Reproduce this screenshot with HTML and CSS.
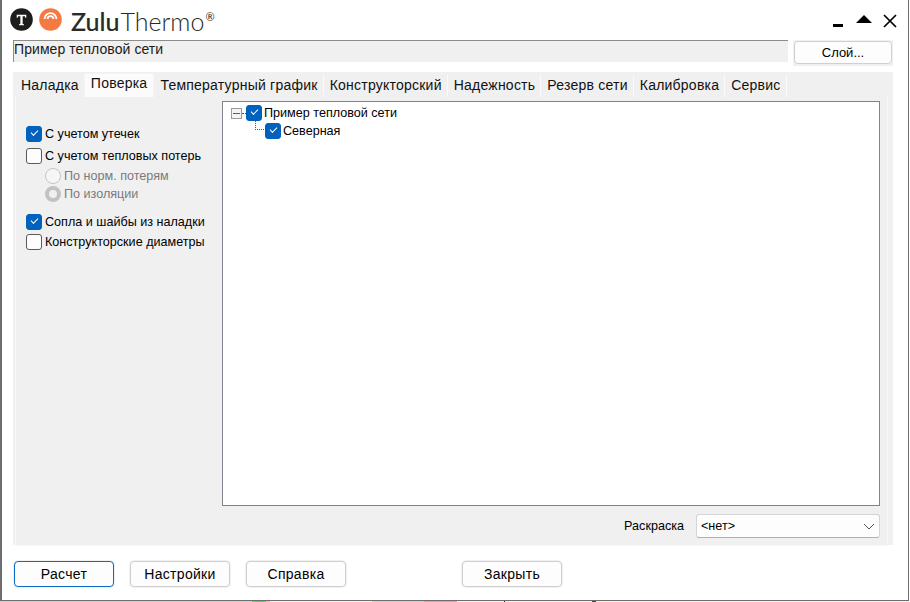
FILE: index.html
```html
<!DOCTYPE html>
<html lang="ru">
<head>
  <meta charset="UTF-8" />
  <title>ZuluThermo</title>
  <link rel="stylesheet" href="styles.css">
</head>
<body>
  <div class="window">
    <header class="titlebar">
      <div class="logo">
        <svg class="logo-icon" width="23" height="23" viewBox="0 0 24 24">
          <circle cx="12" cy="12" r="11.8" fill="#1d1d1b"/>
          <path d="M7 7h10v3.2h-1l-.5-1.6h-2.3v7.8l1.3.5v1.1H9.5v-1.1l1.3-.5V8.6H8.5L8 10.200H7z" fill="#fff"/>
        </svg>
        <svg class="logo-icon" width="23" height="23" viewBox="0 0 24 24">
          <circle cx="12" cy="12" r="11.8" fill="#f47a42"/>
          <path d="M5.800 11.500a6.200 6.200 0 0 1 12.400 0M9 11.500a3 3 0 0 1 6 0" fill="none" stroke="#fff" stroke-width="1.900"/>
        </svg>
        <span class="brand"><span class="brand-bold">Zulu</span><span class="brand-light">Thermo</span><sup>®</sup></span>
      </div>
      <div class="win-buttons">
        <svg width="14" height="14" viewBox="0 0 14 14"><rect x="1" y="10" width="10" height="3" fill="#000"/></svg>
        <svg width="16" height="14" viewBox="0 0 16 14"><path d="M8 1l8 8H0z" fill="#000"/></svg>
        <svg width="16" height="16" viewBox="0 0 16 16"><path d="M2 2l12 12M14 2L2 14" stroke="#000" stroke-width="1.700"/></svg>
      </div>
    </header>

    <div class="path-row">
      <div class="path-field">Пример тепловой сети</div>
      <div class="btn-wrap"><button class="btn btn-layer">Слой...</button></div>
    </div>

    <section class="tabs-panel">
      <nav class="tabs">
        <span class="tab">Наладка</span>
        <span class="tab active">Поверка</span>
        <span class="tab">Температурный график</span>
        <span class="tab">Конструкторский</span>
        <span class="tab">Надежность</span>
        <span class="tab">Резерв сети</span>
        <span class="tab">Калибровка</span>
        <span class="tab">Сервис</span>
      </nav>

      <div class="page">
        <div class="page-main">
          <div class="options">
            <div class="opt"><span class="check on"></span>С учетом утечек</div>
            <div class="opt opt-second"><span class="check"></span>С учетом тепловых потерь</div>
            <div class="radio-row"><span class="radio"></span>По норм. потерям</div>
            <div class="radio-row"><span class="radio on"></span>По изоляции</div>
            <div class="opt opt-third"><span class="check on"></span>Сопла и шайбы из наладки</div>
            <div class="opt opt-last"><span class="check"></span>Конструкторские диаметры</div>
          </div>

          <div class="tree">
            <div class="tree-row">
              <span class="expander"></span>
              <span class="dots-h"></span>
              <span class="check on"></span>Пример тепловой сети
            </div>
            <div class="tree-row tree-child">
              <span class="elbow"></span>
              <span class="check on"></span>Северная
            </div>
          </div>
        </div>

        <div class="color-row">
          <span class="color-label">Раскраска</span>
          <div class="combo">
            <span>&lt;нет&gt;</span>
            <svg width="12" height="7" viewBox="0 0 12 7"><path d="M1 1l5 5 5-5" fill="none" stroke="#555" stroke-width="1"/></svg>
          </div>
        </div>
      </div>
    </section>

    <footer class="actions">
      <button class="btn btn-action btn-default">Расчет</button>
      <button class="btn btn-action">Настройки</button>
      <button class="btn btn-action">Справка</button>
      <button class="btn btn-action btn-close">Закрыть</button>
    </footer>
  </div>
  <div class="below"></div>
</body>
</html>
```

FILE: styles.css
```css
html, body {
  margin: 0;
  padding: 0;
}

body {
  width: 910px;
  height: 602px;
  overflow: hidden;
  background: #fff;
  font-family: "Liberation Sans", Arial, sans-serif;
  font-size: 12.6px;
  color: #000;
}

.window {
  box-sizing: border-box;
  width: 909px;
  height: 601px;
  background: #fff;
  border: solid #6e6e6e;
  border-width: 0 1px 1px 2px;
  padding: 0 15px 0 11px;
}

/* scraps of the window behind, one pixel row under the dialog */
.below {
  height: 1px;
  background: linear-gradient(to right,
    #cfcfcf 0 252px, #5fd06a 252px 266px, #d8c9a0 266px 270px,
    #f4f1e6 270px 372px, #cfcfcf 372px 424px, #d9a0a8 424px 457px,
    #f4f1e6 457px 504px, #222 504px 505px, #f4f1e6 505px 592px,
    #444 592px 596px, #f4f1e6 596px);
}

.titlebar {
  height: 40px;
  display: flex;
  justify-content: space-between;
}

.logo {
  display: flex;
  align-items: center;
  gap: 6px;
  padding-top: 1px;
  margin-left: -3px;
}

.logo-icon {
  margin-top: -3px;
}

.brand {
  font-family: Lato, sans-serif;
  font-size: 25px;
  color: #2b2a29;
  margin-left: 3px;
}

.brand-bold {
  font-weight: 500;
  -webkit-text-stroke: 0.15px #2b2a29;
}

.brand-light {
  font-weight: 300;
  margin-left: 1px;
}

.brand sup {
  font-size: 11px;
  line-height: 0;
  margin-left: 1px;
}

.win-buttons {
  display: flex;
  align-items: center;
  gap: 10px;
  margin-right: -5px;
  padding-top: 1px;
}

.path-row {
  display: flex;
  justify-content: space-between;
  height: 26px;
}

.path-field {
  box-sizing: border-box;
  width: 775px;
  height: 22px;
  background: #f0f0f0;
  border: solid #8c8c8c;
  border-width: 1px 0 0 1px;
  padding-top: 1px;
  font-size: 14px;
  letter-spacing: 0.07px;
  line-height: 15px;
  color: #1a1a1a;
}

.btn-wrap {
  background: #f0f0f0;
  padding: 1px 1px 2px 1px;
  margin-right: 0;
}

.btn {
  box-sizing: border-box;
  font-family: inherit;
  font-size: 14px;
  letter-spacing: 0.3px;
  color: #000;
  background: #fdfdfd;
  border: 1px solid #d0d0d0;
  border-radius: 4px;
  padding: 0;
}

.btn-layer {
  display: block;
  width: 98px;
  height: 23px;
  font-size: 13px;
  letter-spacing: 0;
}

.tabs-panel {
  box-sizing: border-box;
  width: 880px;
  height: 473px;
  margin-top: 6px;
  background: #f0f0f0;
  padding: 1px 5px 0 0;
  display: flex;
  flex-direction: column;
}

.tabs {
  display: flex;
  height: 24px;
  padding-left: 2px;
  flex: none;
}

.tab {
  box-sizing: border-box;
  height: 22px;
  margin-top: 2px;
  padding: 3px 5px 0 6px;
  line-height: 15px;
  font-size: 14px;
  letter-spacing: 0.23px;
  background: #f0f0f0;
  border-right: 1px solid #fafafa;
  white-space: nowrap;
  color: #111;
}

.tab.active {
  height: 24px;
  margin-top: 0;
  margin-left: -1px;
  padding: 2px 6px 0 6px;
  background: #fbfbfb;
  border: 1px solid #f4f4f4;
  border-bottom: 0;
}

.page {
  flex: 1;
  display: flex;
  flex-direction: column;
  box-sizing: border-box;
  margin-left: 2px;
  padding: 4px 0 7px 0;
  border-left: 1px solid #f8f8f8;
  border-right: 1px solid #f8f8f8;
  border-bottom: 1px solid #f8f8f8;
}

.page-main {
  display: flex;
  height: 405px;
  flex: none;
}

.options {
  width: 206px;
  flex: none;
  padding: 25px 0 0 10px;
  box-sizing: border-box;
}

.opt, .radio-row {
  display: flex;
  align-items: center;
  white-space: nowrap;
  height: 16px;
}

.opt-second { margin-top: 6px; }
.opt-third { margin-top: 11px; }
.opt-last { margin-top: 4px; }

.radio-row {
  margin-left: 19px;
  height: 18px;
  color: #7a7a7a;
  gap: 3px;
}

.opt-second + .radio-row { margin-top: 3px; }

.check {
  box-sizing: border-box;
  flex: none;
  width: 16px;
  height: 16px;
  margin-right: 3px;
  border: 1px solid #5a5a5a;
  border-radius: 3px;
  background: #fdfdfd;
  position: relative;
}

.check.on {
  background: #0062bd;
  border-color: #0062bd;
}

.check.on::after {
  content: "";
  position: absolute;
  left: 4px;
  top: 3px;
  width: 6px;
  height: 3px;
  border: solid #fff;
  border-width: 0 0 1px 1px;
  transform: rotate(-45deg);
}

.radio {
  box-sizing: border-box;
  flex: none;
  width: 16px;
  height: 16px;
  border: 1px solid #c4c4c4;
  border-radius: 50%;
  background: #f6f6f6;
}

.radio.on {
  border: 4px solid #c2c2c2;
  background: #f0f0f0;
}

.tree {
  box-sizing: border-box;
  width: 658px;
  height: 405px;
  background: #fff;
  border: 1px solid #82828c;
  padding: 2px 0 0 8px;
}

.tree-row {
  display: flex;
  align-items: center;
  height: 18px;
  white-space: nowrap;
}

.tree-row .check { margin-right: 2px; }

.tree-child {
  padding-left: 23px;
  position: relative;
}

.expander {
  box-sizing: border-box;
  flex: none;
  width: 11px;
  height: 11px;
  border: 1px solid #9a9aa4;
  background: linear-gradient(#5a5a78, #5a5a78) center / 7px 1px no-repeat, #f4f4f4;
}

.dots-h {
  flex: none;
  width: 4px;
  border-top: 1px dotted #555;
}

.elbow {
  position: absolute;
  left: 24px;
  top: -2px;
  width: 10px;
  height: 9px;
  border-left: 1px dotted #555;
  border-bottom: 1px dotted #555;
}

.tree-child .check {
  margin-left: 11px;
}

.color-row {
  display: flex;
  justify-content: flex-end;
  align-items: center;
  margin-top: 8px;
  margin-right: 7px;
  gap: 12px;
}

.combo {
  box-sizing: border-box;
  width: 184px;
  height: 24px;
  background: #fdfdfd;
  border: 1px solid #d4d4d4;
  border-bottom-color: #b0b0b0;
  border-radius: 3px;
  display: flex;
  align-items: center;
  justify-content: space-between;
  padding: 0 4px 0 4px;
}

.actions {
  display: flex;
  margin-top: 16px;
  margin-left: 1px;
}

.btn-action {
  width: 100px;
  height: 26px;
  margin-right: 16px;
  border-color: #d0d0d0;
  box-shadow: 0 0 0 1px #f0f0f0;
}

.btn-default {
  border-color: #0a6cc4;
}

.btn-close {
  margin-left: 100px;
}
```
